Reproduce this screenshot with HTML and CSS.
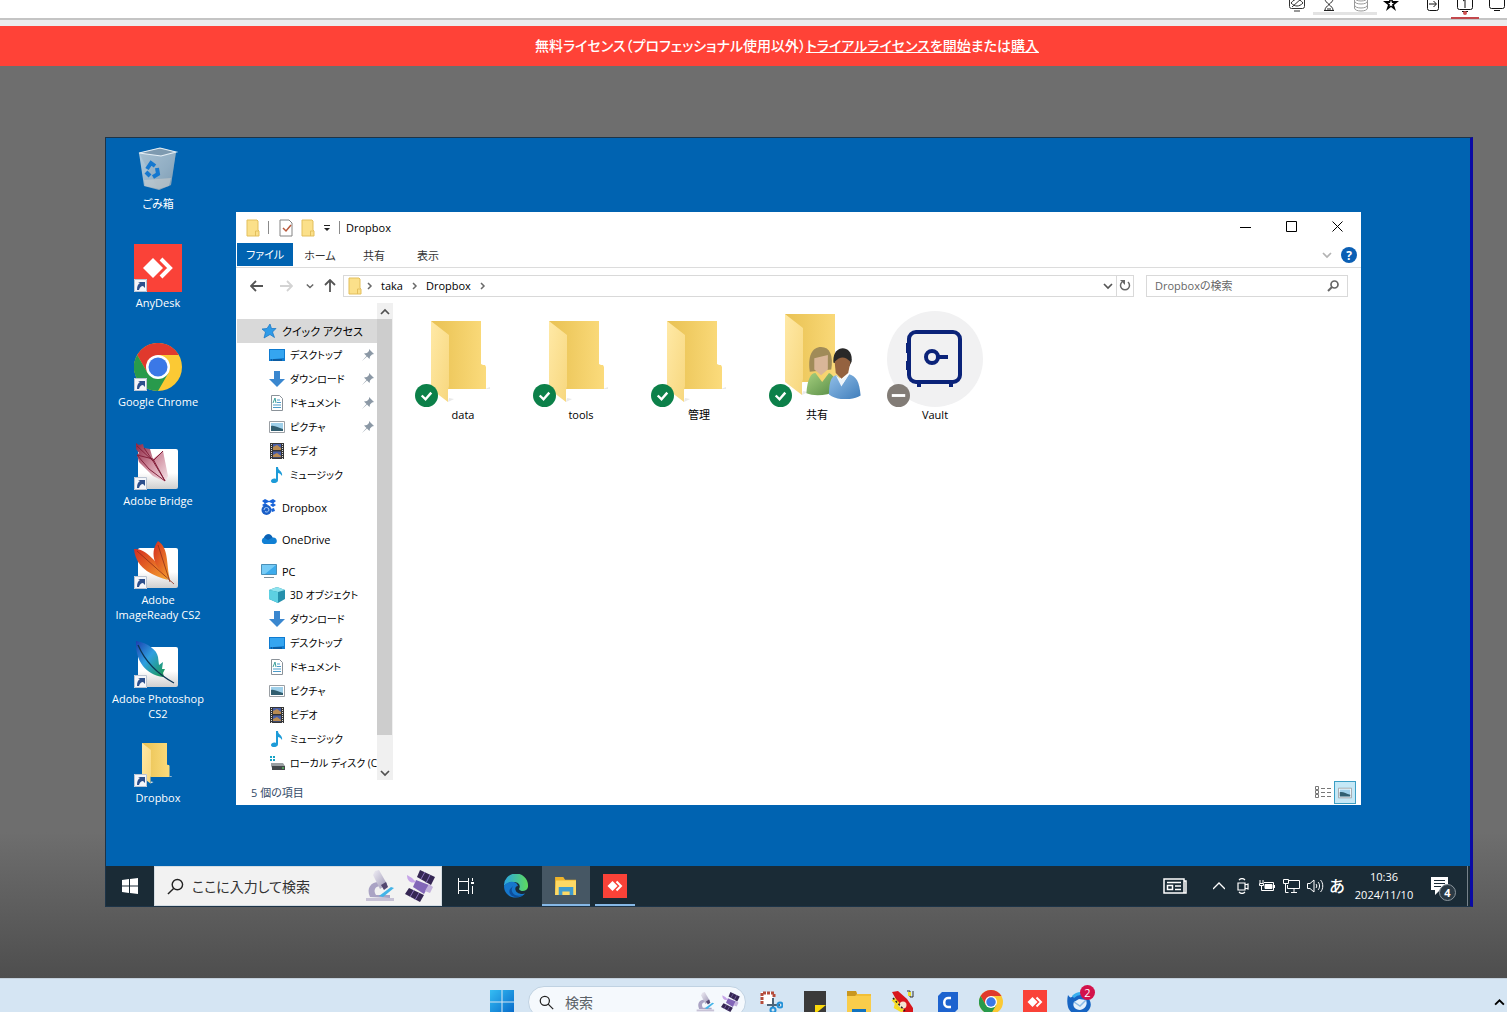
FILE: index.html
```html
<!DOCTYPE html>
<html lang="ja">
<head>
<meta charset="utf-8">
<title>AnyDesk</title>
<link rel="stylesheet" href="styles.css">
</head>
<body>
<svg class="sprite" aria-hidden="true">
  <defs>
    <linearGradient id="gFront" x1="0" y1="0" x2="1" y2="1"><stop offset="0" stop-color="#ffe9a6"/><stop offset="1" stop-color="#f7d77e"/></linearGradient>
    <linearGradient id="gBack" x1="0" y1="0" x2="1" y2="0"><stop offset="0" stop-color="#e9c255"/><stop offset=".35" stop-color="#efca60"/><stop offset="1" stop-color="#fbdb7c"/></linearGradient>
    <linearGradient id="gBin" x1="0" y1="0" x2="1" y2="1"><stop offset="0" stop-color="#c5d8e4"/><stop offset=".6" stop-color="#9fb8ca"/><stop offset="1" stop-color="#7d98ac"/></linearGradient>
    <linearGradient id="gTile" x1="0" y1="0" x2="0" y2="1"><stop offset=".6" stop-color="#fff"/><stop offset="1" stop-color="#cfcfcf"/></linearGradient>
    <linearGradient id="gPetal" x1="0" y1="0" x2="1" y2="1"><stop offset="0" stop-color="#8a2340"/><stop offset=".5" stop-color="#cf8c9e"/><stop offset="1" stop-color="#f6e5e9"/></linearGradient>
    <linearGradient id="gFire" x1="0" y1="0" x2="1" y2="1"><stop offset="0" stop-color="#d42c20"/><stop offset="1" stop-color="#f5a32c"/></linearGradient>
    <linearGradient id="gFeather" x1="0" y1="0" x2="1" y2="1"><stop offset="0" stop-color="#1b3fae"/><stop offset=".45" stop-color="#2f9fe0"/><stop offset="1" stop-color="#1c9a4c"/></linearGradient>
    <linearGradient id="gEdge" x1="0" y1="0" x2="1" y2="0"><stop offset="0" stop-color="#2aa5e4"/><stop offset="1" stop-color="#5edb5c"/></linearGradient>
    <linearGradient id="gWin" x1="0" y1="0" x2="1" y2="1"><stop offset="0" stop-color="#35bdf3"/><stop offset="1" stop-color="#0568c9"/></linearGradient>
    <linearGradient id="gScope" x1="0" y1="0" x2="1" y2="1"><stop offset="0" stop-color="#f0eef5"/><stop offset="1" stop-color="#9b95b4"/></linearGradient>
    <linearGradient id="gGreen" x1="0" y1="0" x2="1" y2="1"><stop offset="0" stop-color="#a5cf7e"/><stop offset="1" stop-color="#578c45"/></linearGradient>
    <linearGradient id="gShirt" x1="0" y1="0" x2="1" y2="1"><stop offset="0" stop-color="#92bfe8"/><stop offset="1" stop-color="#3f7dbb"/></linearGradient>
  </defs>

  <symbol id="folder" viewBox="0 0 60 82">
    <path d="M54 68l5-2v2zM17 81l6-3-5-1z" fill="#e9e9e9"/>
    <path d="M0 0h50v43l2 1h2l1 2v22H17z" fill="url(#gBack)"/>
    <path d="M0 0l18 14v51l-1 4v12L0 68z" fill="url(#gFront)"/>
  </symbol>
  <symbol id="folder-sm" viewBox="0 0 14 18">
    <path d="M1 1h10l1 1v9l1 1v5H1z" fill="#fbe08a" stroke="#e3bf5c"/>
    <path d="M9.500 17v-5h3" fill="none" stroke="#e3bf5c"/>
  </symbol>
  <symbol id="arrow-badge" viewBox="0 0 13 13">
    <path d="M0 0h13v13H0z" fill="#f4f6fa"/><path d="M.5.5h12v12H.5z" fill="none" stroke="#b9c3d2"/>
    <path d="M3 11c0-4 1-6 3-7L4 3h7v6L9 7c-2 0-3 1-4 4z" fill="#2c4f8c"/>
  </symbol>
  <symbol id="bin" viewBox="0 0 48 48">
    <path d="M5 8l21-5 16 4-5 33-12 5-15-4z" fill="url(#gBin)" opacity=".93"/>
    <path d="M5 8l22 3 15-4-5 33-12 5z" fill="#8ba6b9" opacity=".35"/>
    <path d="M5 8l21-5 16 4-15 4z" fill="#7e9ab0" stroke="#e4eef5" stroke-width="1.200"/>
    <path d="M10 35l27-2-2 8-10 3-14-3z" fill="#d5d4cf" opacity=".5"/>
    <g fill="none" stroke="#1478d0" stroke-width="4"><path d="M13 24l4-6 4 3"/><path d="M23 23l1 6-5 3"/><path d="M16 31l-4-4"/></g>
  </symbol>
  <symbol id="anydesk" viewBox="0 0 48 48">
    <path d="M0 0h48v48H0z" fill="#fa4238"/>
    <path d="M9 24l10-10 10 10-10 10z" fill="#fff"/><path d="M27 15l9 9-9 9" fill="none" stroke="#fff" stroke-width="4"/>
  </symbol>
  <symbol id="chrome" viewBox="0 0 48 48">
    <circle cx="24" cy="24" r="24" fill="#fbc934"/>
    <path d="M3.200 12A24 24 0 0 1 44.800 12H24L13.600 30z" fill="#e0392d"/>
    <path d="M3.200 12A24 24 0 0 0 24 48l10.400-18-20.800 0z" fill="#289a4c"/>
    <circle cx="24" cy="24" r="12" fill="#fff"/><circle cx="24" cy="24" r="9.500" fill="#3b78e7"/>
  </symbol>
  <symbol id="bridge" viewBox="0 0 48 48">
    <rect x="4" y="7" width="40" height="40" rx="2" fill="url(#gTile)"/>
    <path d="M2 1l3 2 4-1 1 4 6 1 3 10 10-8 5 25-3 6-12-6-14-14-2-7 2-2-3-4z" fill="url(#gPetal)"/>
    <path d="M3 13l16 4 12 22L15 27zM3 4l16 15-9-13M29 9L19 19l12 20" fill="none" stroke="#83203b"/>
  </symbol>
  <symbol id="imageready" viewBox="0 0 48 48">
    <rect x="4" y="7" width="40" height="40" rx="2" fill="url(#gTile)"/>
    <path d="M0 8c11-1 23 12 34 31-13-4-32-10-34-31z" fill="url(#gFire)"/>
    <path d="M24 0c11 7 8 22 12 39C22 29 14 13 24 0z" fill="url(#gFire)"/>
    <path d="M3 10l37 33M24 4l12 37" fill="none" stroke="#8d2d18" stroke-width=".8"/>
  </symbol>
  <symbol id="photoshop" viewBox="0 0 48 48">
    <rect x="4" y="7" width="40" height="40" rx="2" fill="url(#gTile)"/>
    <path d="M2 1c12 2 21 9 22 16l1 8 4-3-1 7 3 0-2 4 1 4c-13-1-29-11-28-36z" fill="url(#gFeather)"/>
    <path d="M4 5c6 14 16 27 36 38" fill="none" stroke="#0c3555" stroke-width="1.300"/>
  </symbol>
  <symbol id="people" viewBox="0 0 48 46">
    <path d="M3 22C1 8 5 0 13 0s11 8 9 20z" fill="#a08b58"/><path d="M7 10l12-3v13l-6 5-6-5z" fill="#d9b698"/>
    <path d="M0 41c1-13 4-18 8-18l6 8 6-8c5 2 6 8 6 16-7 4-19 5-26 2z" fill="url(#gGreen)"/>
    <path d="M24 14c-2-17 18-17 16-1l-2 4z" fill="#282828"/><path d="M25 13c5-5 9-5 14 0l-2 10-6 5-5-5z" fill="#94623f"/>
    <path d="M20 42c0-13 3-17 7-17l5 8 6-9c6 2 9 6 10 19-7 4-20 5-28-1z" fill="url(#gShirt)"/><path d="M26 25l5 10 6-10-6 4z" fill="#edf4fa"/>
  </symbol>
  <symbol id="vault" viewBox="0 0 96 96">
    <circle cx="48" cy="48" r="48" fill="#f1f1f2"/>
    <g fill="none" stroke="#0b2379" stroke-width="4"><rect x="22" y="21" width="51" height="50" rx="7"/><path d="M21 32v10M21 50v9M32 71v5M64 71v5M51 46h10"/><circle cx="45" cy="46" r="6"/></g>
  </symbol>
  <symbol id="ok" viewBox="0 0 24 24"><circle cx="12" cy="12" r="12" fill="#0c8049"/><path d="M7 12l4 4 6-7" fill="none" stroke="#fff" stroke-width="2.500"/></symbol>
  <symbol id="minus" viewBox="0 0 24 24"><circle cx="12" cy="12" r="12" fill="#827c76"/><path d="M5 12h14" stroke="#fff" stroke-width="3"/></symbol>

  <symbol id="star" viewBox="0 0 16 16"><path d="M9 1l1.500 4.500H15L11.500 9l2 5.500L9 11.500 3 15l1.500-6L1 6l5-.5z" fill="#2f9be8" stroke="#1473c2" stroke-width=".7"/></symbol>
  <symbol id="desktop" viewBox="0 0 16 16"><path d="M0 2h16v12H0z" fill="#0f7bd0"/><path d="M1 3h14v8L5 12H1z" fill="#35a5f0"/><path d="M2 13h12" stroke="#0c3d6e" stroke-dasharray="1 1 9 1"/></symbol>
  <symbol id="download" viewBox="0 0 16 16"><path d="M5 0h6v8h5l-8 8-8-8h5z" fill="#3a87cf"/></symbol>
  <symbol id="doc" viewBox="0 0 16 16"><path d="M2.500.5h8l3 3v12h-11z" fill="#fff" stroke="#8b9299"/><path d="M4 10h8M4 12.500h8M8 7.500h4M8 5h3" stroke="#4b9bc9"/><path d="M4 8l2-5 1 5" fill="none" stroke="#3c9f9b"/></symbol>
  <symbol id="picture" viewBox="0 0 16 16"><path d="M.5 2.500h15v11H.5z" fill="#fff" stroke="#9a9fa4"/><path d="M2 4h12v8H2z" fill="#9fd0ea"/><path d="M2 7c4-1 7 2 12 3v2H2z" fill="#315e70"/></symbol>
  <symbol id="video" viewBox="0 0 16 16"><path d="M1 0h14v16H1z" fill="#343434"/><path d="M4 1h8v6H4zM4 8.500h8v6H4z" fill="#4a60a8"/><path d="M4 4l4-2 4 3v2H4zM4 12l4-2 4 3v1H4z" fill="#b98b52"/><path d="M2.500 1v15M13.500 1v15" stroke="#ddd" stroke-dasharray="1 1"/></symbol>
  <symbol id="music" viewBox="0 0 16 16"><path d="M7 0h2c0 4 5 4 4 9-1-2-3-3-4-3v7c0 4-7 4-7 1 0-2 3-3 5-2z" fill="#1d9bd8"/></symbol>
  <symbol id="dropbox" viewBox="0 0 16 16"><path d="M1 2l3-2 4 2 4-2 3 2-3 2.500L8 3 4 4.500zM1 6l3-2 3 2-3 2zM9 6l3-2 3 2-3 2z" fill="#1763d9"/><circle cx="5.500" cy="11" r="5" fill="#1b5fc7"/><path d="M3 11a2.500 2.500 0 0 1 5 0 2.500 2.500 0 0 1-4 1.500" fill="none" stroke="#a9cbf5"/><path d="M10 10l3-1 1 3-3 1z" fill="#1763d9"/></symbol>
  <symbol id="onedrive" viewBox="0 0 16 16"><path d="M3 13a3.500 3.500 0 0 1 0-6.500C5 2 10 2 11.500 6.500 17 6 17 13 13 13z" fill="#1180d4"/><path d="M3 6.500C5 2 10 2 11.500 6.500L7 9z" fill="#0c61b4"/></symbol>
  <symbol id="pc" viewBox="0 0 16 16"><path d="M.5 1.500h15v10H.5z" fill="#3cabec" stroke="#4a90b8"/><path d="M1 2h14L4 11H1z" fill="#76cbf6"/><path d="M3 14.500h10" stroke="#7f8e98"/></symbol>
  <symbol id="cube" viewBox="0 0 16 16"><path d="M0 3l8-3 8 3v9l-7 4-9-4z" fill="#2590ac"/><path d="M0 3l8-3 8 3-7 2z" fill="#8fe3ee"/><path d="M0 3l9 2v11l-9-4z" fill="#5dd0e2"/></symbol>
  <symbol id="disk" viewBox="0 0 16 16"><path d="M1 1h2v2H1zM4 1h2v2H4zM1 4h2v2H1zM4 4h2v2H4z" fill="#16a3c6"/><path d="M2 8h12l2 3v4H4l-2-4z" fill="#9a9fa2"/><path d="M3 11h13v4H3z" fill="#44484a"/><path d="M13 13h2" stroke="#5cf06a"/></symbol>
  <symbol id="pin" viewBox="0 0 12 12"><path d="M7 0l5 5-2 .5-2 2L7.500 10 5 7.500 0 12l4.500-5L2 4.500 5 4l2-2z" fill="#8b98a5"/></symbol>

  <symbol id="scope" viewBox="0 0 32 32">
    <path d="M5 27c-4-9 1-15 9-15l2 4c-6 0-8 4-5 9h14v3z" fill="#aaa3c4"/>
    <path d="M8 5l2-4 4-1 8 14-7 5z" fill="url(#gScope)"/><path d="M16 15l5-3 2 5-4 3z" fill="#544870"/>
    <path d="M1 28h28v3H1z" fill="#c7c2d6"/><path d="M14 26l12-9 3 1-11 9z" fill="#43b4e8"/>
  </symbol>
  <symbol id="satellite" viewBox="0 0 32 32">
    <path d="M15 0l15 7-4 8-14-8zM4 18l15 7-4 7-15-8z" fill="#352653"/>
    <path d="M20 2l-4 7M25 5l-4 8M9 20l-4 7M14 23l-4 7" stroke="#8972bb"/>
    <path d="M11 10l13 5-5 9-11-7z" fill="#8367b8"/><path d="M2 5c0 6 4 9 9 7L7 8z" fill="#c6a5e8"/><path d="M24 14l4 3-3 6-5-2z" fill="#c2b1dc"/>
  </symbol>
  <symbol id="edge" viewBox="0 0 24 24">
    <path d="M0 12a12 12 0 0 1 24-1c1 6-7 8-9 4 2-3 0-7-5-7-4 0-7 1-10 4z" fill="url(#gEdge)"/>
    <path d="M0 12c4-6 13-5 14 0-4 0-4 7 3 8 2 0 4 0 5-2-5 9-22 7-22-6z" fill="#1677cc"/>
    <path d="M9 12c-4 6 2 12 10 9-8 5-16 0-13-6z" fill="#0d4f9e"/>
  </symbol>
  <symbol id="files" viewBox="0 0 24 22">
    <path d="M0 1h9l2 3h12v17H0z" fill="#eeb32a"/><path d="M1 5h22v16H0z" fill="#fdd965"/><path d="M4 12h16v9h-4v-4H8v4H4z" fill="#3f9ccf"/>
  </symbol>
  <symbol id="files-host" viewBox="0 0 24 24">
    <path d="M0 1h9l1 3h14v20H0z" fill="#f2bf37"/><path d="M0 6h24v18H0z" fill="#f9cd4b"/><path d="M0 1h9l1 3-2 2H0z" fill="#c9971f"/><path d="M5 19h14v5H5z" fill="#1273c0"/>
  </symbol>
  <symbol id="snip" viewBox="0 0 24 24"><path d="M2 2h12v12H2z" fill="#fff"/><path d="M3 14V3h12v5" fill="none" stroke="#b54d3c" stroke-width="3" stroke-dasharray="3 1"/><path d="M14 8v10M8 15h13" stroke="#4d6478" stroke-width="2"/><circle cx="21" cy="15" r="2.500" fill="none" stroke="#2592d8" stroke-width="2"/><circle cx="14" cy="20" r="2.500" fill="none" stroke="#2592d8" stroke-width="2"/></symbol>
  <symbol id="note" viewBox="0 0 24 24"><path d="M1 1h22v23H1z" fill="#3a3a3a"/><path d="M12 15h11l-11 9z" fill="#fbd90c"/></symbol>
  <symbol id="bug" viewBox="0 0 24 24"><path d="M1 2l6-1 9 8 6 9v6h-9L7 13z" fill="#d8161b"/><path d="M2 9l4 4-1 4 7 4" fill="none" stroke="#f6dc25" stroke-width="4"/><circle cx="12" cy="15" r="3.500" fill="#f3e4d0"/><path d="M16 1h3v6h3V1" fill="none" stroke="#333"/><path d="M17 2h3v4h-3z" fill="#eadf29"/><path d="M2 8l12 13" stroke="#222" stroke-width="1.500" stroke-dasharray="2 2"/></symbol>
  <symbol id="clip" viewBox="0 0 24 24"><path d="M7 2h16v17l-6 6H3V6z" fill="#1d63cf"/><path d="M16 8h-3c-5 0-5 9 0 9h3" fill="none" stroke="#fff" stroke-width="2.500"/></symbol>
  <symbol id="thunder" viewBox="0 0 24 24"><path d="M1 5c2 3 3 3 5 1 9-8 21 4 17 12-4 9-19 9-22-1-1-4-1-8 0-12z" fill="#1765c3"/><path d="M7 12l5-3 7 1c2 5-1 9-6 10-5 0-8-4-6-8z" fill="#e5f1fb"/><path d="M7 12l6 4 6-6" fill="none" stroke="#8bbbe6" stroke-width="1.500"/><path d="M6 7c5-5 12-4 15 0" stroke="#3ab0ef" stroke-width="3" fill="none"/></symbol>
  <symbol id="lens" viewBox="0 0 18 18"><circle cx="11" cy="7" r="5.500" fill="none" stroke="currentColor" stroke-width="1.500"/><path d="M7 11l-6 6" stroke="currentColor" stroke-width="1.500"/></symbol>
  <symbol id="lens-bold" viewBox="0 0 12 12"><circle cx="7.500" cy="4.500" r="3.500" fill="none" stroke="currentColor" stroke-width="1.700"/><path d="M5 7l-4 4" stroke="currentColor" stroke-width="2"/></symbol>
  <symbol id="down" viewBox="0 0 10 10"><path d="M1 3l4 4 4-4" fill="none" stroke="currentColor" stroke-width="1.700"/></symbol>
  <symbol id="right" viewBox="0 0 8 10"><path d="M2 2l3 3-3 3" fill="none" stroke="#6a6a6a" stroke-width="1.500"/></symbol>
</svg>

<header class="toolbar">
  <button class="tool" aria-label="プライバシー"><svg width="16" height="24" viewBox="0 0 16 24" fill="none" stroke="#333"><rect x=".5" y="7.500" width="15" height="12" rx="2"/><path d="M2 14c4-5 8-5 12 0-4 4-8 4-12 0zM3 18L13 9M5 22h6" /></svg></button>
  <span class="tool-group">
    <button class="tool" aria-label="待機"><svg width="16" height="24" viewBox="0 0 16 24" fill="none" stroke="#222"><path d="M3 9.500h10M3 21.500h10M4 10c0 4 8 7 8 11M12 10c0 4-8 7-8 11M6 20h4"/></svg></button>
    <button class="tool" aria-label="保存"><svg width="16" height="24" viewBox="0 0 16 24" fill="none" stroke="#999"><ellipse cx="8" cy="9" rx="6.500" ry="3"/><path d="M1.500 9v10c0 4 13 4 13 0V9M1.500 12c0 4 13 4 13 0M1.500 16c0 4 13 4 13 0"/></svg></button>
  </span>
  <button class="tool" aria-label="お気に入り"><svg width="16" height="24" viewBox="0 0 16 24"><path d="M8 6l2 6h6l-5 4 2 6-5-4-5 4 2-6-5-4h6z"/><path d="M8 11l1 3h2l-2 1.500.500 2L8 16.500 6.500 17.500l.500-2L5 14h2z" fill="#fff"/></svg></button>
  <button class="tool tool-exit" aria-label="切断"><svg width="12" height="24" viewBox="0 0 12 24" fill="none" stroke="#111"><rect x=".5" y="7.500" width="11" height="14" rx="2"/><path d="M2 15h7M6.500 12l3 3-3 3"/></svg></button>
  <button class="tool tool-active" aria-label="モニター 1"><svg width="16" height="24" viewBox="0 0 16 24" fill="none" stroke="#111"><rect x=".5" y="4.500" width="15" height="14" rx="2"/><path d="M6 10l2-1.500V17M5 20.500h6"/></svg></button>
  <button class="tool" aria-label="モニター 2"><svg width="16" height="24" viewBox="0 0 16 24" fill="none" stroke="#111"><rect x=".5" y="4.500" width="15" height="15" rx="2"/><path d="M5 21.500h6"/></svg></button>
</header>

<p class="banner">無料ライセンス（プロフェッショナル使用以外）<a href="#trial">トライアルライセンスを開始</a>または<a href="#buy">購入</a></p>

<main class="stage">
  <section class="remote">
    <div class="desktop">
      <ul class="shortcuts">
        <li><svg class="i48"><use href="#bin"/></svg><span>ごみ箱</span></li>
        <li class="linked"><svg class="i48"><use href="#anydesk"/></svg><svg class="arrow"><use href="#arrow-badge"/></svg><span>AnyDesk</span></li>
        <li class="linked"><svg class="i48"><use href="#chrome"/></svg><svg class="arrow"><use href="#arrow-badge"/></svg><span>Google Chrome</span></li>
        <li class="linked"><svg class="i48"><use href="#bridge"/></svg><svg class="arrow"><use href="#arrow-badge"/></svg><span>Adobe Bridge</span></li>
        <li class="linked"><svg class="i48"><use href="#imageready"/></svg><svg class="arrow"><use href="#arrow-badge"/></svg><span>Adobe<br>ImageReady CS2</span></li>
        <li class="linked"><svg class="i48"><use href="#photoshop"/></svg><svg class="arrow"><use href="#arrow-badge"/></svg><span>Adobe Photoshop<br>CS2</span></li>
        <li class="linked"><svg class="i48" viewBox="0 0 48 48"><use href="#folder" x="5" y="4" width="36" height="41"/></svg><svg class="arrow"><use href="#arrow-badge"/></svg><span>Dropbox</span></li>
      </ul>

      <section class="window">
        <header class="titlebar">
          <svg class="fs"><use href="#folder-sm"/></svg><i class="bar"></i>
          <svg width="14" height="18" viewBox="0 0 14 18"><path d="M1 1h9l3 3v13H1z" fill="#fff" stroke="#848484"/><path d="M4 9l3 3 5-6" fill="none" stroke="#b8593c" stroke-width="1.500"/></svg>
          <svg class="fs"><use href="#folder-sm"/></svg>
          <svg width="8" height="8" viewBox="0 0 8 8"><path d="M1 1.500h6" stroke="#222"/><path d="M1 4h6L4 7z" fill="#222"/></svg><i class="bar"></i>
          <h1>Dropbox</h1>
          <div class="controls">
            <button aria-label="最小化"><svg width="11" height="11" viewBox="0 0 11 11"><path d="M0 6.500h11" stroke="#000"/></svg></button>
            <button aria-label="最大化"><svg width="11" height="11" viewBox="0 0 11 11"><path d="M.5.5h10v10H.5z" fill="none" stroke="#000"/></svg></button>
            <button aria-label="閉じる"><svg width="11" height="11" viewBox="0 0 11 11"><path d="M.5.5l10 10M10.500.5l-10 10" stroke="#000"/></svg></button>
          </div>
        </header>
        <div class="ribbon">
          <button class="file-tab">ファイル</button><button>ホーム</button><button>共有</button><button>表示</button>
          <svg class="fold"><use href="#down"/></svg>
          <button class="help" aria-label="ヘルプ">?</button>
        </div>
        <div class="address">
          <button aria-label="戻る"><svg width="13" height="12" viewBox="0 0 13 12" fill="none" stroke="#555" stroke-width="1.800"><path d="M13 6H2M6 1L1 6l5 5"/></svg></button>
          <button aria-label="進む"><svg width="13" height="12" viewBox="0 0 13 12" fill="none" stroke="#d3d3d3" stroke-width="1.800"><path d="M0 6h11M7 1l5 5-5 5"/></svg></button>
          <button class="recent" aria-label="履歴"><svg width="8" height="8"><use href="#down"/></svg></button>
          <button aria-label="上へ"><svg width="12" height="13" viewBox="0 0 12 13" fill="none" stroke="#555" stroke-width="1.800"><path d="M6 13V2M1 6l5-5 5 5"/></svg></button>
          <div class="path">
            <svg class="fs"><use href="#folder-sm"/></svg><svg class="sep"><use href="#right"/></svg><a href="#taka">taka</a><svg class="sep"><use href="#right"/></svg><a href="#dropbox-folder">Dropbox</a><svg class="sep"><use href="#right"/></svg>
            <svg class="drop"><use href="#down"/></svg>
            <button aria-label="更新"><svg width="12" height="13" viewBox="0 0 12 13"><path d="M9 3a4.500 4.500 0 1 1-6 0" fill="none" stroke="#666" stroke-width="1.500"/><path d="M1 1h5v5z" fill="#666"/></svg></button>
          </div>
          <label class="find"><input type="search" placeholder="Dropboxの検索" aria-label="Dropboxの検索"><svg width="12" height="12"><use href="#lens-bold"/></svg></label>
        </div>
        <div class="body">
          <nav class="tree">
            <ul>
              <li class="root current"><a href="#q"><svg><use href="#star"/></svg>クイック アクセス</a></li>
              <li><a href="#q1"><svg><use href="#desktop"/></svg>デスクトップ</a><svg class="pin"><use href="#pin"/></svg></li>
              <li><a href="#q2"><svg><use href="#download"/></svg>ダウンロード</a><svg class="pin"><use href="#pin"/></svg></li>
              <li><a href="#q3"><svg><use href="#doc"/></svg>ドキュメント</a><svg class="pin"><use href="#pin"/></svg></li>
              <li><a href="#q4"><svg><use href="#picture"/></svg>ピクチャ</a><svg class="pin"><use href="#pin"/></svg></li>
              <li><a href="#q5"><svg><use href="#video"/></svg>ビデオ</a></li>
              <li><a href="#q6"><svg><use href="#music"/></svg>ミュージック</a></li>
            </ul>
            <ul><li class="root"><a href="#d"><svg><use href="#dropbox"/></svg>Dropbox</a></li></ul>
            <ul><li class="root"><a href="#o"><svg><use href="#onedrive"/></svg>OneDrive</a></li></ul>
            <ul>
              <li class="root"><a href="#p"><svg><use href="#pc"/></svg>PC</a></li>
              <li><a href="#p1"><svg><use href="#cube"/></svg>3D オブジェクト</a></li>
              <li><a href="#p2"><svg><use href="#download"/></svg>ダウンロード</a></li>
              <li><a href="#p3"><svg><use href="#desktop"/></svg>デスクトップ</a></li>
              <li><a href="#p4"><svg><use href="#doc"/></svg>ドキュメント</a></li>
              <li><a href="#p5"><svg><use href="#picture"/></svg>ピクチャ</a></li>
              <li><a href="#p6"><svg><use href="#video"/></svg>ビデオ</a></li>
              <li><a href="#p7"><svg><use href="#music"/></svg>ミュージック</a></li>
              <li><a href="#p8"><svg><use href="#disk"/></svg>ローカル ディスク (C</a></li>
            </ul>
          </nav>
          <div class="scroll">
            <svg class="up"><use href="#down"/></svg><div class="track"><div class="thumb"></div></div><svg><use href="#down"/></svg>
          </div>
          <ul class="files">
            <li><svg viewBox="0 0 96 96"><use href="#folder" x="16" y="10" width="60" height="82"/><use href="#ok" x="0" y="73" width="23" height="23"/></svg><span>data</span></li>
            <li><svg viewBox="0 0 96 96"><use href="#folder" x="16" y="10" width="60" height="82"/><use href="#ok" x="0" y="73" width="23" height="23"/></svg><span>tools</span></li>
            <li><svg viewBox="0 0 96 96"><use href="#folder" x="16" y="10" width="60" height="82"/><use href="#ok" x="0" y="73" width="23" height="23"/></svg><span>管理</span></li>
            <li><svg viewBox="0 0 96 96"><use href="#folder" x="16" y="3" width="60" height="82"/><use href="#people" x="36" y="36" width="57" height="52"/><use href="#ok" x="0" y="73" width="23" height="23"/></svg><span>共有</span></li>
            <li><svg viewBox="0 0 96 96"><use href="#vault"/><use href="#minus" x="0" y="73" width="23" height="23"/></svg><span>Vault</span></li>
          </ul>
        </div>
        <footer class="status">
          <span>5 個の項目</span>
          <button aria-label="詳細"><svg width="16" height="13" viewBox="0 0 16 13" fill="none" stroke="#777"><path d="M.5.5h3v3h-3zM.5 4.500h3v3h-3zM.5 8.500h3v3h-3zM6 2.500h4M12 2.500h4M6 6.500h4M12 6.500h4M6 10.500h4M12 10.500h4"/></svg></button>
          <button class="on" aria-label="大アイコン"><svg width="14" height="14"><use href="#picture"/></svg></button>
        </footer>
      </section>
    </div>

    <footer class="taskbar">
      <button class="app" aria-label="スタート"><svg width="16" height="16" viewBox="0 0 16 16" fill="#fff"><path d="M0 2l7-1v6.500H0zM8 1l8-1v7.500H8zM0 8.500h7V15l-7-1zM8 8.500h8V16l-8-1z"/></svg></button>
      <label class="search"><svg class="glass"><use href="#lens"/></svg><input type="search" placeholder="ここに入力して検索" aria-label="検索"><svg class="i32"><use href="#scope"/></svg><svg class="i32"><use href="#satellite"/></svg></label>
      <div class="apps">
        <button class="app" aria-label="タスク ビュー"><svg width="18" height="16" viewBox="0 0 18 16" fill="none" stroke="#fff"><path d="M1.500 0v3.500h10V0M1.500 16v-3.500h10V16M1.500 3.500v9M11.500 3.500v9M15.500 0v3M15.500 8v8"/><path d="M14 5h3" stroke-width="2"/></svg></button>
        <button class="app" aria-label="Edge"><svg width="24" height="24"><use href="#edge"/></svg></button>
        <button class="app open" aria-label="エクスプローラー"><svg width="22" height="20"><use href="#files"/></svg></button>
        <button class="app running" aria-label="AnyDesk"><svg width="24" height="24"><use href="#anydesk"/></svg></button>
      </div>
      <div class="tray">
        <button class="news" aria-label="ニュース"><svg width="24" height="16" viewBox="0 0 24 16" fill="none" stroke="#fff" stroke-width="1.500"><path d="M21 3h2v12H1V1h20v14M4 4.500h14M12 8h6M12 11.500h6M4.500 7.500h5v4h-5z"/></svg></button>
        <button aria-label="隠れているインジケーター"><svg width="12" height="8" viewBox="0 0 12 8"><path d="M0 7l6-6 6 6" fill="none" stroke="#fff" stroke-width="1.300"/></svg></button>
        <button aria-label="会議"><svg width="12" height="16" viewBox="0 0 12 16" fill="none" stroke="#fff" stroke-width="1.200"><path d="M1 5h7v7H1zM8 7l3-1v5l-3-1M2 2c2-2 4-2 6 0M2 14c2 2 4 2 6 0"/></svg></button>
        <button aria-label="バッテリー"><svg width="16" height="12" viewBox="0 0 16 12" fill="none" stroke="#fff"><path d="M1 0v3M4 0v3M.5 3.500h4v2h-4zM2.500 6v4.500h3M5 2.500h9.500v8H5"/><path d="M6 4.500h7v4H6z" fill="#fff"/><path d="M15.500 5v3"/></svg></button>
        <button aria-label="ネットワーク"><svg width="17" height="15" viewBox="0 0 17 15" fill="none" stroke="#fff"><path d="M6 1.500h10.500v8H4.500V6M8 13.500h6M11 10v3M.5.5h5v4h-5zM2.500 5v8.500h3"/></svg></button>
        <button aria-label="音量"><svg width="17" height="14" viewBox="0 0 17 14" fill="none" stroke="#fff"><path d="M.5 4.500H3L7 1v12L3 9.500H.5zM9 5c1 1 1 3 0 4M11 3c2 2 2 6 0 8M13.500 1c3 3 3 9 0 12"/></svg></button>
        <button class="ime">あ</button>
        <button class="clock"><time>10:36</time><time>2024/11/10</time></button>
        <button class="notes" aria-label="通知"><svg width="17" height="18" viewBox="0 0 17 18"><path d="M0 0h17v13H9l-5 5v-5H0z" fill="#fff"/><path d="M3 3.500h11M3 6.500h11M3 9.500h7" stroke="#1a2b36"/></svg><b>4</b></button>
      </div>
    </footer>
  </section>
</main>

<footer class="host">
  <div class="host-inner">
    <button aria-label="スタート"><svg width="23" height="23" viewBox="0 0 23 23" fill="url(#gWin)"><path d="M0 0h11v11H0zM12 0h11v11H12zM0 12h11v11H0zM12 12h11v11H12z"/></svg></button>
    <label class="host-search"><svg class="glass"><use href="#lens"/></svg><input type="search" placeholder="検索" aria-label="ホストの検索"><svg><use href="#scope"/></svg><svg><use href="#satellite"/></svg></label>
    <button aria-label="切り取り"><svg><use href="#snip"/></svg></button>
    <button aria-label="メモ"><svg><use href="#note"/></svg></button>
    <button aria-label="エクスプローラー"><svg><use href="#files-host"/></svg></button>
    <button aria-label="ゲーム"><svg><use href="#bug"/></svg></button>
    <button aria-label="クリップ"><svg><use href="#clip"/></svg></button>
    <button aria-label="Chrome"><svg><use href="#chrome"/></svg></button>
    <button aria-label="AnyDesk"><svg><use href="#anydesk"/></svg></button>
    <button class="mail" aria-label="Thunderbird"><svg><use href="#thunder"/></svg><b>2</b></button>
    <button class="more" aria-label="その他"><svg><use href="#down"/></svg></button>
  </div>
</footer>
</body>
</html>
```
FILE: styles.css
```css
* { box-sizing: border-box; }

body {
  margin: 0;
  height: 100vh;
  display: flex;
  flex-direction: column;
  overflow: hidden;
  font: 11px/15px "Open Sans", "Noto Sans CJK JP", sans-serif;
  font-feature-settings: "palt";
  color: #000;
}

ul, p, h1 { margin: 0; padding: 0; list-style: none; font-weight: 400; }
a { color: inherit; text-decoration: none; }
svg { display: block; flex: none; }
button {
  display: flex;
  align-items: center;
  justify-content: center;
  flex: none;
  padding: 0;
  border: 0;
  background: none;
  color: inherit;
  font: inherit;
  font-feature-settings: inherit;
}
input {
  flex: 1;
  min-width: 0;
  padding: 0;
  border: 0;
  outline: 0;
  background: none;
  color: inherit;
  font: inherit;
  font-feature-settings: inherit;
}
input::placeholder { color: inherit; opacity: 1; }

.sprite { position: absolute; width: 0; height: 0; }

/* AnyDesk session toolbar */
.toolbar {
  height: 26px;
  flex: none;
  display: flex;
  justify-content: flex-end;
  overflow: hidden;
  padding-right: 2px;
  background: linear-gradient(#fff 18px, #c4c4c4 18px, #c4c4c4 20px, #ececec 20px);
}
.tool { height: 24px; align-items: flex-end; margin-top: -11px; }
.tool-group {
  display: flex;
  gap: 16px;
  height: 15px;
  margin: 0 6px 0 8px;
  padding: 0 8px;
  border-bottom: 3px solid #e3e3e3;
}
.tool-exit { margin-left: 28px; }
.tool-active {
  position: relative;
  height: 30px;
  align-items: flex-start;
  padding: 0 6px;
  margin: -9px 10px 0 12px;
  height: 28px;
  border-bottom: 2px solid #c2484c;
}
.tool-active::after {
  content: "";
  position: absolute;
  bottom: 2px;
  width: 4px;
  height: 4px;
  border-radius: 2px;
  background: #d0504f;
}

.banner {
  flex: none;
  padding: 11px 0 11px 67px;
  background: #ff4237;
  color: #fff;
  font-size: 14px;
  font-weight: 500;
  line-height: 18px;
  text-align: center;
  white-space: nowrap;
}
.banner a { text-decoration: underline; }

/* Remote screen */
.stage {
  flex: 1;
  min-height: 0;
  display: flex;
  padding: 71px 34px 71px 105px;
  background: linear-gradient(#6e6e6e 84%, #4e4e4e);
}
.remote {
  flex: 1;
  min-width: 0;
  display: flex;
  flex-direction: column;
  border: 1px solid #1d3448;
  border-right: 3px solid #0a0aa5;
}
.desktop { flex: 1; min-height: 0; display: flex; background: #0063b1; }

.shortcuts {
  flex: none;
  width: 104px;
  padding-top: 7px;
  display: grid;
  grid-auto-rows: 99px;
  align-content: start;
  color: #fff;
  text-align: center;
  white-space: nowrap;
}
.shortcuts li { position: relative; display: flex; flex-direction: column; align-items: center; gap: 3px; }
.i48 { width: 48px; height: 48px; }
.arrow { position: absolute; left: 28px; top: 35px; width: 13px; height: 13px; }

.window {
  flex: 1;
  min-width: 0;
  display: flex;
  flex-direction: column;
  margin: 74px 109px 61px 26px;
  background: #fff;
}
.fs { width: 14px; height: 18px; }
.titlebar { display: flex; align-items: center; gap: 8px; height: 31px; padding: 0 1px 0 10px; }
.bar { width: 1px; height: 13px; background: #8a8a8a; }
.titlebar .bar { margin-right: 2px; }
.titlebar h1 { margin-left: -4px; font-size: 11px; }
.controls { display: flex; margin-left: auto; }
.controls button { width: 46px; height: 31px; padding-bottom: 2px; }

.ribbon { display: flex; height: 25px; padding-left: 1px; border-bottom: 1px solid #dcdcdc; color: #333; }
.ribbon button { width: 54px; }
.ribbon .file-tab { width: 56px; height: 23px; background: #0063b1; color: #fff; }
.fold { width: 10px; height: 10px; margin: 7px 9px 0 auto; color: #b3b3b3; }
.ribbon .help {
  width: 16px;
  height: 16px;
  margin: 4px 4px 0 0;
  border-radius: 8px;
  background: #0b5fb4;
  color: #fff;
  font-size: 12px;
  font-weight: 700;
}

.address { display: flex; align-items: center; height: 35px; padding: 0 13px 0 10px; }
.address > button { width: 20px; height: 22px; margin-right: 10px; }
.address > .recent { width: 8px; margin: 0 6px 0 0; color: #666; }
.address > .recent + button { margin-right: 3px; }
.path {
  flex: 1;
  display: flex;
  align-items: center;
  height: 22px;
  margin-right: 12px;
  padding-left: 4px;
  border: 1px solid #d9d9d9;
}
.sep { width: 8px; height: 10px; margin: 0 7px 0 8px; }
.path .fs { margin-right: -4px; }
.drop { width: 10px; height: 10px; margin: 0 3px 0 auto; color: #555; }
.path button { width: 17px; height: 20px; border-left: 1px solid #d9d9d9; }
.find {
  display: flex;
  align-items: center;
  width: 202px;
  height: 22px;
  padding: 0 8px;
  border: 1px solid #d9d9d9;
  color: #666;
}

.body { flex: 1; min-height: 0; display: flex; }
.tree { flex: none; width: 141px; padding: 16px 0 0 1px; overflow: hidden; }
.tree ul + ul { margin-top: 8px; }
.tree li { display: flex; align-items: center; height: 24px; padding-left: 32px; font-size: 10px; }
.tree .root { padding-left: 24px; font-size: 11px; }
.tree .current { background: #d9d9d9; }
.tree a { display: flex; align-items: center; gap: 5px; white-space: nowrap; }
.tree a svg { width: 16px; height: 16px; }
.tree .pin { width: 12px; height: 12px; margin: 0 3px 0 auto; }
.scroll {
  flex: none;
  width: 16px;
  display: flex;
  flex-direction: column;
  align-items: center;
  padding: 4px 0 2px;
  background: #f0f0f0;
  color: #505050;
}
.scroll svg { width: 10px; height: 10px; }
.scroll .up { transform: rotate(180deg); }
.track { flex: 1; align-self: stretch; padding: 2px 0 33px; }
.thumb { height: 100%; width: 15px; background: #cdcdcd; }

.files { display: flex; gap: 22px; padding: 8px 0 0 22px; text-align: center; }
.files svg { width: 96px; height: 96px; }

.status { display: flex; align-items: center; height: 25px; padding: 0 5px 0 15px; color: #344b68; }
.status span { margin-right: auto; }
.status button { width: 22px; height: 23px; }
.status .on { border: 1px solid #3b9ec4; background: #c5e8f6; }

/* Remote taskbar */
.taskbar { flex: none; display: flex; height: 40px; background: #1a2b36; color: #fff; }
.app { width: 48px; height: 40px; }
.search {
  display: flex;
  align-items: center;
  gap: 8px;
  width: 288px;
  padding: 0 4px 0 12px;
  border: 1px solid #d5dde3;
  background: #f2f2f2;
  color: #333;
  font-size: 14px;
}
.glass { width: 17px; height: 17px; color: #222; }
.i32 { width: 32px; height: 34px; }
.apps { display: flex; gap: 2px; }
.open { padding-top: 2px; background: #465764; border-bottom: 2px solid #86b8e6; }
.running { width: 40px; margin-left: 3px; padding-top: 2px; border-bottom: 2px solid #86b8e6; }
.tray { display: flex; align-items: center; margin-left: auto; padding-right: 2px; }
.tray::after { content: ""; width: 1px; height: 40px; background: #76828a; }
.tray button { width: 24px; height: 40px; }
.tray .news { margin-right: 20px; }
.tray .ime { font-size: 16px; width: 20px; font-weight: 500; }
.tray .clock { flex-direction: column; width: 74px; line-height: 18px; }
.tray .notes { position: relative; width: 46px; padding-right: 10px; }
.notes b {
  position: absolute;
  left: 18px;
  top: 18px;
  width: 17px;
  height: 17px;
  border: 1px solid #8b959c;
  border-radius: 9px;
  background: #2b3a44;
  line-height: 15px;
}

/* Host taskbar, running past the lower edge */
.host { flex: none; height: 34px; overflow: hidden; background: #d5e5f3; border-top: 1px solid #c3d0dc; }
.host-inner { display: flex; align-items: center; height: 46px; }
.host-inner::before { content: ""; flex: 481; }
.host-inner button { width: 44px; height: 44px; }
.host-inner button svg { width: 24px; height: 24px; }
.host-search {
  display: flex;
  align-items: center;
  gap: 5px;
  width: 218px;
  height: 32px;
  margin: 0 3px 0 4px;
  padding: 0 4px 0 10px;
  border: 1px solid #c0d2e2;
  border-radius: 16px;
  background: #f5f9fd;
  color: #5b6167;
  font-size: 14px;
}
.host-search svg { width: 20px; height: 22px; }
.host-search .glass { width: 15px; height: 15px; margin-right: 6px; transform: scaleX(-1); }
.mail { position: relative; }
.mail b {
  position: absolute;
  right: 6px;
  top: 5px;
  width: 15px;
  height: 15px;
  border-radius: 8px;
  background: #d3124a;
  color: #fff;
  font-weight: 400;
}
.host-inner .more { flex: 405; justify-content: flex-end; padding-right: 2px; }
.host-inner .more svg { width: 11px; height: 11px; transform: rotate(180deg); }
```
